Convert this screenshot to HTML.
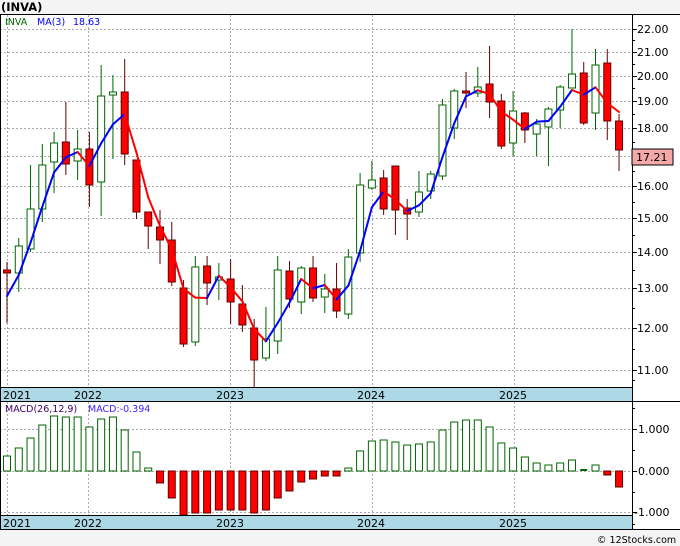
<!DOCTYPE html>
<html><head><meta charset="utf-8"><style>
html,body{margin:0;padding:0;background:#f4f4f4;}
svg{display:block;font-family:"DejaVu Sans","Liberation Sans",sans-serif;}
</style></head><body>
<svg id="s" width="680" height="546" xmlns="http://www.w3.org/2000/svg">
<rect x="0" y="0" width="680" height="546" fill="#f4f4f4"/>
<rect x="0" y="14" width="680" height="516" fill="#ffffff"/>
<text x="1" y="11" font-size="11.5" font-weight="bold" fill="#000">(INVA)</text>
<g id="grid" stroke="#aaa" stroke-width="1" stroke-dasharray="2,2"></g>
<g id="c"></g>
<rect x="0" y="387" width="632" height="14" fill="#add8e6"/>
<rect x="0" y="515" width="632" height="15" fill="#add8e6"/>
<line x1="0" y1="14.5" x2="680" y2="14.5" stroke="#000"/>
<line x1="0" y1="387.5" x2="632" y2="387.5" stroke="#000"/>
<line x1="0" y1="401.5" x2="680" y2="401.5" stroke="#000"/>
<line x1="0" y1="515.5" x2="632" y2="515.5" stroke="#000"/>
<line x1="0" y1="529.5" x2="680" y2="529.5" stroke="#000"/>
<line x1="0.5" y1="14" x2="0.5" y2="530" stroke="#000"/>
<line x1="632.5" y1="14" x2="632.5" y2="530" stroke="#000"/>
<g font-size="11" fill="#000">
<text x="3" y="399">2021</text><text x="74" y="399">2022</text><text x="216" y="399">2023</text><text x="357" y="399">2024</text><text x="499" y="399">2025</text>
<text x="3" y="527">2021</text><text x="74" y="527">2022</text><text x="216" y="527">2023</text><text x="357" y="527">2024</text><text x="499" y="527">2025</text>
</g>
<text x="5" y="25" font-size="9.5" fill="#006400">INVA</text>
<text x="37" y="25" font-size="9.5" fill="#0000ff">MA(3)</text>
<text x="73" y="25" font-size="9.5" fill="#0000ff">18.63</text>
<text x="5" y="412" font-size="9.5" fill="#400060">MACD(26,12,9)</text>
<text x="88" y="412" font-size="9.5" fill="#4020ff">MACD:-0.394</text>
<g id="ax" font-size="11" fill="#000"></g>
<rect x="632" y="149" width="41" height="16" fill="#f4a8a8" stroke="#000"/>
<text x="636" y="161" font-size="11" fill="#000">17.21</text>
<text x="597" y="543" font-size="9.5" fill="#000">© 12Stocks.com</text>
</svg>
<script>
var NS="http://www.w3.org/2000/svg";
function el(p,t,a){var e=document.createElementNS(NS,t);for(var k in a)e.setAttribute(k,a[k]);p.appendChild(e);return e;}
var g=document.getElementById('grid'),c=document.getElementById('c'),ax=document.getElementById('ax');
var py={"22.00":29,"21.00":52,"20.00":76,"19.00":101,"18.00":128,"16.00":186,"15.00":218,"14.00":252,"13.00":288,"12.00":328,"11.00":370};
var hl=[29,52,76,101,128,156,186,218,252,288,328,370];
hl.forEach(function(y){el(g,'line',{x1:0,y1:y+.5,x2:632,y2:y+.5});});
[429,471,512].forEach(function(y){el(g,'line',{x1:0,y1:y+.5,x2:632,y2:y+.5});});
[7,88,230,372,514].forEach(function(x){el(g,'line',{x1:x+.5,y1:15,x2:x+.5,y2:387});el(g,'line',{x1:x+.5,y1:402,x2:x+.5,y2:515});});
for(var k in py){var y=py[k];el(ax,'line',{x1:632,y1:y+.5,x2:637,y2:y+.5,stroke:'#000'});var t=el(ax,'text',{x:637,y:y+4});t.textContent=k;}
[40,64,88,114,142,171,202,235,270,308,349,380].forEach(function(y){el(ax,'line',{x1:632,y1:y+.5,x2:635,y2:y+.5,stroke:'#000'});});
[["1.000",429],["0.000",471],["-1.000",512]].forEach(function(a){el(ax,'line',{x1:632,y1:a[1]+.5,x2:637,y2:a[1]+.5,stroke:'#000'});var t=el(ax,'text',{x:a[0][0]=='-'?634:638,y:a[1]+4});t.textContent=a[0];});
[408,450,492,524].forEach(function(y){el(ax,'line',{x1:632,y1:y+.5,x2:635,y2:y+.5,stroke:'#000'});});
var K=[['r',270,273,262,323],['g',246,273,238,292],['g',209,249,165,252],['g',165,209,144,222],['g',143,162,132,193],['r',142,164,102,175],['g',149,161,130,180],['r',149,185,132,207],['g',96,182,65,216],['g',92,95,75,159],['r',92,154,59,165],['r',160,212,160,219],['r',212,226,212,249],['r',227,240,210,264],['r',240,282,222,286],['r',288,344,280,347],['g',267,342,256,346],['r',266,283,256,305],['g',277,280,263,300],['r',279,302,259,324],['r',304,325,285,332],['r',328,360,319,387],['g',339,358,307,361],['g',270,341,256,354],['r',271,299,261,308],['g',268,302,266,314],['r',268,298,256,302],['g',289,297,274,313],['r',289,311,263,318],['g',257,314,249,319],['g',185,253,173,262],['g',180,188,161,190],['r',178,209,170,215],['r',166,210,166,235],['r',208,214,199,240],['g',192,212,171,217],['g',174,191,171,199],['g',105,176,99,180],['g',91,128,89,139],['r',91,93,72,108],['g',87,93,67,97],['r',84,102,46,118],['r',101,146,94,149],['g',111,143,91,156],['r',113,130,112,143],['g',124,134,119,156],['g',109,127,107,166],['g',87,110,85,128],['g',74,88,29,88],['r',73,123,62,125],['g',65,113,49,130],['r',63,121,49,140],['r',121,150,114,171]];
var M=[456,448,438,425,416,417,417,427,419,417,430,452,468,483,498,515,513,513,510,510,510,513,510,498,491,482,479,476,476,468,451,441,440,442,445,444,442,430,422,420,420,427,443,448,457,463,465,463,460,470,465,475,487];
function X(i){return 7+i*11.77;}
var closes=[];
K.forEach(function(k,i){var x=X(i),G=k[0]=='g';
 var wc=G?'#006400':'#600000';
 el(c,'line',{x1:x,y1:k[3],x2:x,y2:k[4],stroke:wc,'stroke-width':1});
 var h=Math.max(k[2]-k[1],2);
 el(c,'rect',{x:x-3.5,y:k[1],width:7,height:h,fill:G?'#fff':'#ff0000',stroke:wc,'stroke-width':1});
 closes.push(G?k[1]:k[2]);
});
var ma=[];for(var i=0;i<closes.length;i++){ if(i<2){ma.push(null);continue;} ma.push((closes[i]+closes[i-1]+closes[i-2])/3);}
ma[0]=296;ma[1]=275;
for(var i=1;i<ma.length;i++){var col=ma[i]<ma[i-1]?'#0000ff':'#ff0000';
 el(c,'line',{x1:X(i-1),y1:ma[i-1],x2:X(i),y2:ma[i],stroke:col,'stroke-width':2,'stroke-linecap':'round'});}
M.forEach(function(m,i){var x=X(i);var up=m<=471;
 var y=up?m:471,h=Math.max(Math.abs(m-471),1);
 if(i==49){el(c,'rect',{x:x-3.5,y:469,width:7,height:2,fill:'#006400'});return;}
 el(c,'rect',{x:x-3.5,y:y,width:7,height:h,fill:up?'#fff':'#ff0000',stroke:up?'#006400':'#600000','stroke-width':1});
});
</script>
</body></html>
